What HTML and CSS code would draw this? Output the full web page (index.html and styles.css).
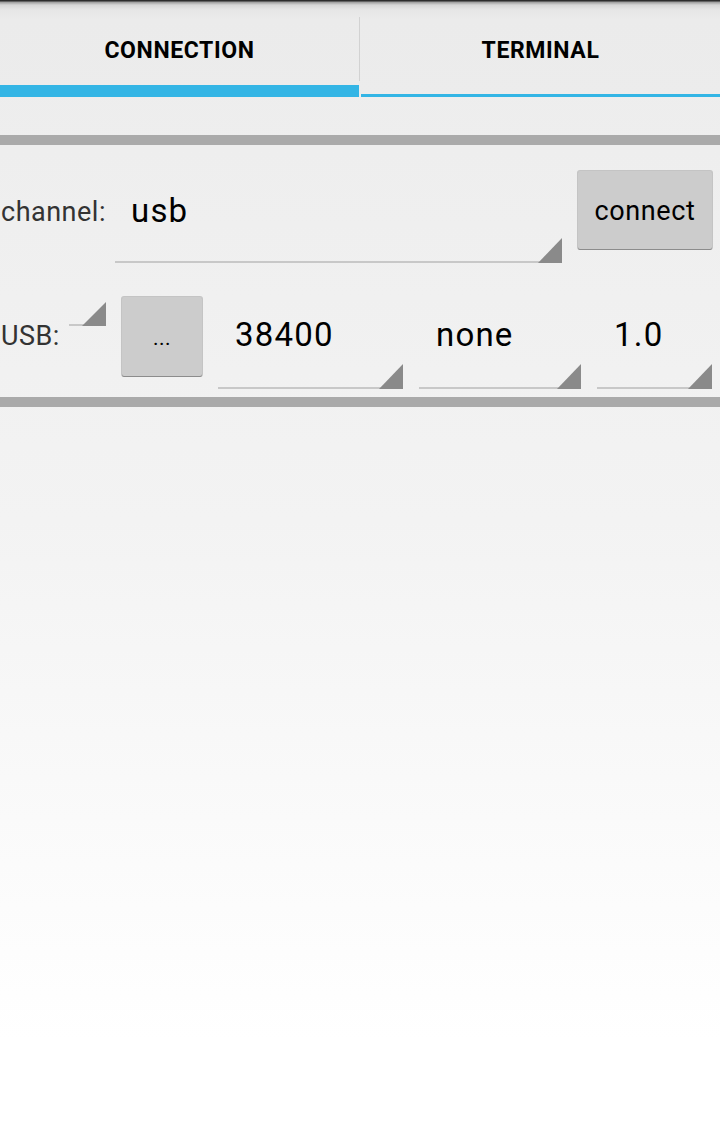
FILE: index.html
```html
<!DOCTYPE html>
<html>
<head>
<meta charset="utf-8">
<link rel="stylesheet" href="styles.css">
</head>
<body>
<div class="screen">
  <div class="tabs">
    <div class="tab tab-selected">CONNECTION</div>
    <div class="tab-divider"></div>
    <div class="tab tab-plain">TERMINAL</div>
  </div>
  <div class="content">
    <div class="rule"></div>
    <div class="row row-channel">
      <div class="label label-channel">channel:</div>
      <div class="spinner spinner-channel"><span class="value">usb</span></div>
      <div class="button button-connect">connect</div>
    </div>
    <div class="row row-usb">
      <div class="label label-usb">USB:</div>
      <div class="spinner spinner-small"></div>
      <div class="button button-dots">...</div>
      <div class="spinner spinner-baud"><span class="value">38400</span></div>
      <div class="spinner spinner-parity"><span class="value">none</span></div>
      <div class="spinner spinner-stop"><span class="value">1.0</span></div>
    </div>
    <div class="rule"></div>
  </div>
</div>
</body>
</html>
```

FILE: styles.css
```css
* { box-sizing: border-box; }

html, body {
  margin: 0;
  padding: 0;
}

body {
  width: 720px;
  height: 1128px;
  overflow: hidden;
  font-family: Roboto, "Liberation Sans", sans-serif;
  background: linear-gradient(#ececec 0px, #eeeeee 150px, #f3f3f3 520px, #fafafa 820px, #ffffff 1040px);
}

.screen {
  width: 720px;
  height: 1128px;
}

/* ---------- tabs ---------- */
.tabs {
  display: flex;
  height: 97px;
  background: linear-gradient(#2c2c2c 0px, #2c2c2c 1px, #9a9a9a 2px, #d6d6d6 5px, #e6e6e6 10px, #ebebeb 20px, #ececec 97px);
}

.tab {
  width: 359px;
  height: 97px;
  padding-top: 39px;
  text-align: center;
  font-size: 23px;
  line-height: 23px;
  letter-spacing: 0.6px;
  font-weight: 700;
  color: #000;
}

.tab-plain {
  flex: 1;
  width: auto;
  border-bottom: 3px solid #33b5e5;
}

.tab-selected {
  border-bottom: 12px solid #33b5e5;
}

.tab-divider {
  width: 2px;
  height: 64px;
  margin-top: 17px;
  border-left: 1px solid #d2d2d2;
}

/* ---------- content ---------- */
.content {
  padding-top: 38px;
}

.rule {
  height: 10px;
  background: #aaaaaa;
}

.row {
  display: flex;
  align-items: flex-start;
}

.row-channel { height: 135px; }
.row-usb { height: 117px; }

.label {
  font-size: 27px;
  line-height: 27px;
  letter-spacing: 0.5px;
  color: #333333;
  padding-left: 1px;
}

.label-channel {
  width: 115px;
  margin-top: 54px;
}

.label-usb {
  width: 69px;
  margin-top: 43px;
}

.spinner {
  position: relative;
  border-bottom: 2px solid #c8c8c8;
  padding-left: 16px;
}

.spinner::after {
  content: "";
  position: absolute;
  right: 0;
  bottom: -2px;
  width: 24px;
  height: 25px;
  background: #8a8a8a;
  clip-path: polygon(100% 0, 100% 100%, 0 100%);
}

.value {
  display: block;
  font-size: 33px;
  line-height: 33px;
  letter-spacing: 1.2px;
  color: #000;
}

.spinner-channel {
  width: 447px;
  height: 92px;
  margin-top: 26px;
  padding-top: 23px;
}

.spinner-small {
  width: 37px;
  height: 24px;
  margin-top: 22px;
  padding-left: 0;
}

.spinner-small::after {
  width: 24px;
  height: 24px;
}

.spinner-baud,
.spinner-parity,
.spinner-stop {
  height: 92px;
  margin-top: 17px;
  margin-left: 16px;
  padding-top: 21px;
}

.spinner-baud { width: 185px; padding-left: 17px; }
.spinner-parity { width: 162px; padding-left: 17px; }
.spinner-stop { width: 115px; padding-left: 17px; }

.button {
  background: #cccccc;
  border-radius: 2px;
  box-shadow: 0 1px 0 #8c8c8c, 0 0 0 1px #c4c4c4;
  text-align: center;
  color: #000;
}

.button-connect {
  width: 134px;
  height: 78px;
  margin-top: 26px;
  margin-left: 16px;
  padding-top: 27px;
  font-size: 27px;
  line-height: 27px;
  letter-spacing: 0.6px;
}

.button-dots {
  width: 80px;
  height: 79px;
  margin-top: 17px;
  margin-left: 16px;
  padding-top: 31px;
  font-size: 21px;
  line-height: 21px;
  letter-spacing: 0.5px;
}
```
